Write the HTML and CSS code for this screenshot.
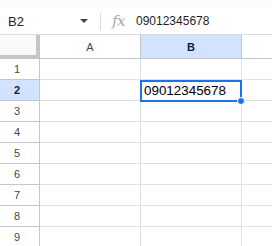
FILE: index.html
```html
<!DOCTYPE html>
<html lang="en">
  <head>
    <meta charset="UTF-8" />
    <title>Sheet</title>
    <link rel="stylesheet" href="styles.css">
  </head>
  <body>
    <div class="topstrip"></div>

    <div class="formula-bar">
      <div class="name-box">B2</div>
      <span class="caret"></span>
      <span class="divider"></span>
      <span class="fx">fx</span>
      <div class="formula">09012345678</div>
    </div>

    <div class="sheet">
      <div class="row head">
        <div class="corner"></div>
        <div class="col-head">A</div>
        <div class="col-head active">B</div>
        <div class="col-head rest"></div>
      </div>
      <div class="row"><div class="row-head">1</div><div class="cell"></div><div class="cell"></div><div class="cell rest"></div></div>
      <div class="row"><div class="row-head active">2</div><div class="cell"></div><div class="cell"></div><div class="cell rest"></div></div>
      <div class="row"><div class="row-head">3</div><div class="cell"></div><div class="cell"></div><div class="cell rest"></div></div>
      <div class="row"><div class="row-head">4</div><div class="cell"></div><div class="cell"></div><div class="cell rest"></div></div>
      <div class="row"><div class="row-head">5</div><div class="cell"></div><div class="cell"></div><div class="cell rest"></div></div>
      <div class="row"><div class="row-head">6</div><div class="cell"></div><div class="cell"></div><div class="cell rest"></div></div>
      <div class="row"><div class="row-head">7</div><div class="cell"></div><div class="cell"></div><div class="cell rest"></div></div>
      <div class="row"><div class="row-head">8</div><div class="cell"></div><div class="cell"></div><div class="cell rest"></div></div>
      <div class="row"><div class="row-head">9</div><div class="cell"></div><div class="cell"></div><div class="cell rest"></div></div>

      <div class="selection">
        09012345678
        <span class="handle"></span>
      </div>
    </div>
  </body>
</html>
```

FILE: styles.css
```css
* {
  margin: 0;
  padding: 0;
  box-sizing: border-box;
}

body {
  width: 272px;
  height: 246px;
  overflow: hidden;
  background: #fff;
  font-family: "Liberation Sans", Arial, sans-serif;
  color: #1f1f1f;
}

.topstrip {
  height: 8px;
  background: #f9fbfd;
}

/* formula bar */
.formula-bar {
  height: 27px;
  display: flex;
  align-items: center;
  border-bottom: 1px solid #dadce0;
}

.name-box {
  width: 80px;
  padding-left: 8px;
  font-size: 13px;
  color: #1f1f1f;
}

.caret {
  width: 0;
  height: 0;
  border-left: 4px solid transparent;
  border-right: 4px solid transparent;
  border-top: 4px solid #444746;
}

.divider {
  width: 1px;
  height: 17px;
  margin-left: 12px;
  background: #dadce0;
}

.fx {
  margin-left: 11px;
  width: 24px;
  font-family: "DejaVu Serif", serif;
  font-style: italic;
  font-size: 15px;
  color: #a8a8a8;
  letter-spacing: -0.5px;
}

.formula {
  font-size: 12px;
  color: #1f1f1f;
}

/* grid */
.sheet {
  position: relative;
}

.row {
  display: flex;
  height: 21px;
}

.row.head {
  height: 24px;
}

.corner {
  width: 40px;
  background: #f8f9fa;
  border-right: 4px solid #c4c7c5;
  border-bottom: 4px solid #c4c7c5;
}

.col-head {
  width: 101px;
  display: flex;
  align-items: center;
  justify-content: center;
  font-size: 11px;
  color: #444746;
  background: #fff;
  border-right: 1px solid #c4c7c5;
  border-bottom: 1px solid #c4c7c5;
}

.col-head.active {
  background: #d3e3fd;
  color: #0b1f44;
  font-weight: bold;
}

.row-head {
  width: 40px;
  display: flex;
  align-items: center;
  justify-content: center;
  padding-right: 5px;
  font-size: 11px;
  color: #444746;
  border-right: 1px solid #c4c7c5;
  border-bottom: 1px solid #c4c7c5;
}

.row-head.active {
  background: #d3e3fd;
  color: #0b1f44;
  font-weight: bold;
}

.cell {
  width: 101px;
  border-right: 1px solid #e1e1e1;
  border-bottom: 1px solid #e1e1e1;
}

.rest {
  flex: 1;
  border-right: none;
}

.selection {
  position: absolute;
  left: 140px;
  top: 45px;
  width: 102px;
  height: 22px;
  border: 2px solid #1a73e8;
  padding-left: 2px;
  font-size: 13.4px;
  line-height: 18px;
  color: #000;
}

.handle {
  position: absolute;
  right: -5px;
  bottom: -5px;
  width: 8px;
  height: 8px;
  border-radius: 50%;
  background: #1a73e8;
  border: 1px solid #fff;
}
```
